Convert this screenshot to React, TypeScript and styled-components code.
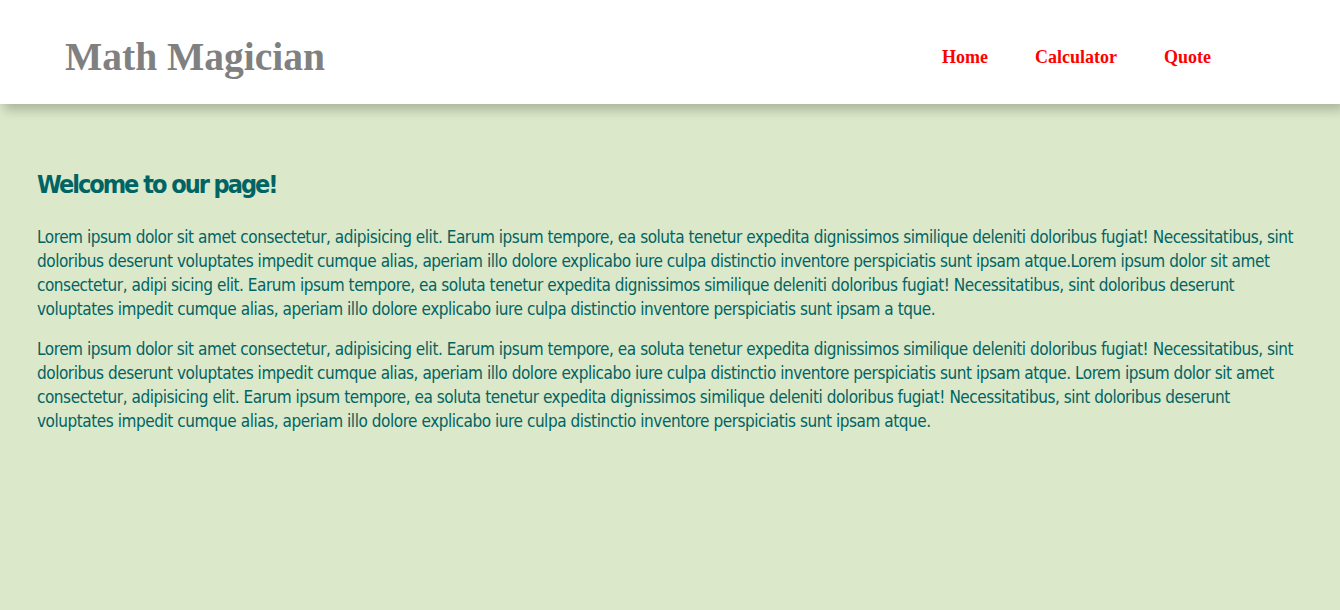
import React from 'react'
import styled, { createGlobalStyle } from 'styled-components'

const GlobalStyle = createGlobalStyle`
  body {
    margin: 0;
    background-color: #dbe8c9;
  }
`

const Header = styled.header`
  display: flex;
  align-items: center;
  justify-content: space-between;
  height: 104px;
  padding: 10px 129px 0 65px;
  background-color: #fff;
  box-shadow: 4px 6px 10px rgba(0, 0, 0, 0.22);
  box-sizing: border-box;
  position: relative;
`

const Logo = styled.h1`
  margin: 0;
  font-family: "Liberation Serif", serif;
  font-size: 39.5px;
  font-weight: bold;
  color: #808080;
`

const Nav = styled.nav`
  display: flex;
  gap: 47px;
`

const NavLink = styled.a`
  font-family: "Liberation Serif", serif;
  font-size: 18px;
  font-weight: bold;
  color: #ff0000;
  text-decoration: none;
`

const Main = styled.main`
  padding: 50px 37px 0;
  color: #006464;
  font-family: "DejaVu Sans Condensed", "DejaVu Sans", sans-serif;
  font-stretch: condensed;
`

const Title = styled.h2`
  margin: 16px 0 26px;
  font-size: 25px;
  font-weight: bold;
  letter-spacing: -2px;
`

const Paragraph = styled.p`
  margin: 0 0 16px;
  font-size: 17px;
  line-height: 24px;
  letter-spacing: -0.45px;
`

function App() {
  return (
    <>
      <GlobalStyle />
      <Header>
        <Logo>Math Magician</Logo>
        <Nav>
          <NavLink href="#">Home</NavLink>
          <NavLink href="#">Calculator</NavLink>
          <NavLink href="#">Quote</NavLink>
        </Nav>
      </Header>
      <Main>
        <Title>Welcome to our page!</Title>
        <Paragraph>
          Lorem ipsum dolor sit amet consectetur, adipisicing elit. Earum ipsum tempore, ea soluta tenetur expedita dignissimos similique deleniti doloribus fugiat! Necessitatibus, sint doloribus deserunt voluptates impedit cumque alias, aperiam illo dolore explicabo iure culpa distinctio inventore perspiciatis sunt ipsam atque.Lorem ipsum dolor sit amet consectetur, adipi sicing elit. Earum ipsum tempore, ea soluta tenetur expedita dignissimos similique deleniti doloribus fugiat! Necessitatibus, sint doloribus deserunt voluptates impedit cumque alias, aperiam illo dolore explicabo iure culpa distinctio inventore perspiciatis sunt ipsam a tque.
        </Paragraph>
        <Paragraph>
          Lorem ipsum dolor sit amet consectetur, adipisicing elit. Earum ipsum tempore, ea soluta tenetur expedita dignissimos similique deleniti doloribus fugiat! Necessitatibus, sint doloribus deserunt voluptates impedit cumque alias, aperiam illo dolore explicabo iure culpa distinctio inventore perspiciatis sunt ipsam atque. Lorem ipsum dolor sit amet consectetur, adipisicing elit. Earum ipsum tempore, ea soluta tenetur expedita dignissimos similique deleniti doloribus fugiat! Necessitatibus, sint doloribus deserunt voluptates impedit cumque alias, aperiam illo dolore explicabo iure culpa distinctio inventore perspiciatis sunt ipsam atque.
        </Paragraph>
      </Main>
    </>
  )
}

export default App
